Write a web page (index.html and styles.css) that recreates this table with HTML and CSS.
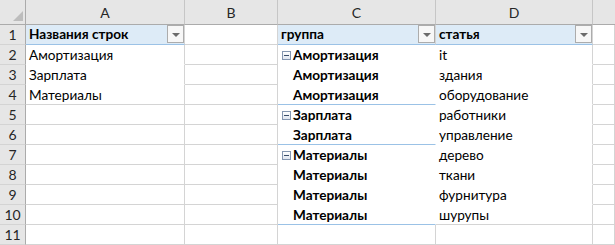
FILE: index.html
```html
<!DOCTYPE html>
<html lang="ru">
<head>
<meta charset="utf-8">
<link rel="stylesheet" href="styles.css">
</head>
<body>
<div class="sheet">
  <div class="corner"><span class="tri"></span></div>
  <div class="colh">A</div>
  <div class="colh">B</div>
  <div class="colh">C</div>
  <div class="colh">D</div>
  <div class="colh edge"></div>

  <div class="rowh">1</div>
  <div class="cell phead b">Названия строк<span class="dd"></span></div>
  <div class="cell"></div>
  <div class="cell phead b">группа<span class="dd"></span></div>
  <div class="cell phead b">статья<span class="dd"></span></div>
  <div class="cell"></div>

  <div class="rowh">2</div>
  <div class="cell nb">Амортизация</div>
  <div class="cell"></div>
  <div class="cell grp nb nr b"><span class="tog"></span>Амортизация</div>
  <div class="cell nb">it</div>
  <div class="cell"></div>

  <div class="rowh">3</div>
  <div class="cell nb">Зарплата</div>
  <div class="cell"></div>
  <div class="cell grp ind nb nr b">Амортизация</div>
  <div class="cell nb">здания</div>
  <div class="cell"></div>

  <div class="rowh">4</div>
  <div class="cell">Материалы</div>
  <div class="cell"></div>
  <div class="cell grp ind bb nr b">Амортизация</div>
  <div class="cell nb">оборудование</div>
  <div class="cell"></div>

  <div class="rowh">5</div>
  <div class="cell"></div>
  <div class="cell"></div>
  <div class="cell grp nb nr b"><span class="tog"></span>Зарплата</div>
  <div class="cell nb">работники</div>
  <div class="cell"></div>

  <div class="rowh">6</div>
  <div class="cell"></div>
  <div class="cell"></div>
  <div class="cell grp ind bb nr b">Зарплата</div>
  <div class="cell nb">управление</div>
  <div class="cell"></div>

  <div class="rowh">7</div>
  <div class="cell"></div>
  <div class="cell"></div>
  <div class="cell grp nb nr b"><span class="tog"></span>Материалы</div>
  <div class="cell nb">дерево</div>
  <div class="cell"></div>

  <div class="rowh">8</div>
  <div class="cell"></div>
  <div class="cell"></div>
  <div class="cell grp ind nb nr b">Материалы</div>
  <div class="cell nb">ткани</div>
  <div class="cell"></div>

  <div class="rowh">9</div>
  <div class="cell"></div>
  <div class="cell"></div>
  <div class="cell grp ind nb nr b">Материалы</div>
  <div class="cell nb">фурнитура</div>
  <div class="cell"></div>

  <div class="rowh">10</div>
  <div class="cell"></div>
  <div class="cell"></div>
  <div class="cell grp ind bb nr b">Материалы</div>
  <div class="cell">шурупы</div>
  <div class="cell"></div>

  <div class="rowh">11</div>
  <div class="cell"></div>
  <div class="cell"></div>
  <div class="cell"></div>
  <div class="cell"></div>
  <div class="cell"></div>
</div>
</body>
</html>
```
FILE: styles.css
```css
html, body {
  margin: 0;
  padding: 0;
  background: #ffffff;
}

.sheet {
  display: grid;
  grid-template-columns: 26px 159px 93px 158px 157px 22px;
  grid-template-rows: 25px repeat(11, 20px);
  width: 615px;
  height: 245px;
  overflow: hidden;
  font-family: Lato, "Liberation Sans", sans-serif;
  font-size: 13.6px;
  color: #000;
}

.corner,
.colh,
.rowh {
  box-sizing: border-box;
  background: #e6e6e6;
  border-right: 1px solid #c6c6c6;
  border-bottom: 1px solid #c6c6c6;
  color: #262626;
}

.corner {
  position: relative;
  border-bottom-color: #ababab;
  border-right-color: #ababab;
}

.corner .tri {
  position: absolute;
  right: 2px;
  bottom: 3px;
  width: 0;
  height: 0;
  border-left: 10px solid transparent;
  border-bottom: 10px solid #bdbdbd;
}

.colh {
  border-bottom-color: #ababab;
  text-align: center;
  line-height: 25px;
  font-size: 14px;
}

.colh.edge {
  border-right: none;
}

.rowh {
  border-right-color: #ababab;
  border-bottom-color: #d4d4d4;
  text-align: center;
  line-height: 20px;
  font-size: 14px;
}

.cell {
  box-sizing: border-box;
  border-right: 1px solid #d4d4d4;
  border-bottom: 1px solid #d4d4d4;
  padding-left: 3px;
  padding-top: 1px;
  line-height: 18px;
  white-space: nowrap;
  overflow: hidden;
  display: flex;
  align-items: center;
}

.b {
  font-weight: bold;
}

.nb {
  border-bottom-color: #ffffff;
}

.nr {
  border-right-color: #ffffff;
}

.bb {
  border-bottom-color: #9bc2e6;
}

.phead {
  background: #ddebf7;
  border-bottom-color: #9bc2e6;
  align-items: flex-start;
  padding-top: 0;
  line-height: 19px;
}

.dd {
  box-sizing: border-box;
  margin-left: auto;
  flex: none;
  width: 17px;
  height: 18px;
  border: 1px solid #acacac;
  background: #f7f7f7;
  position: relative;
}

.dd::after {
  content: "";
  position: absolute;
  left: 4px;
  top: 7px;
  border-left: 4px solid transparent;
  border-right: 4px solid transparent;
  border-top: 4px solid #6b6b6b;
}

.grp {
  padding-left: 4px;
}

.grp.ind {
  padding-left: 15px;
}

.tog {
  box-sizing: border-box;
  flex: none;
  width: 9px;
  height: 9px;
  margin-right: 2px;
  border: 1px solid #8496b0;
  background: linear-gradient(#ffffff, #dfe6f0);
  position: relative;
  top: 0;
}

.tog::after {
  content: "";
  position: absolute;
  left: 1px;
  top: 3px;
  width: 5px;
  height: 1px;
  background: #3b4f6b;
}
```
